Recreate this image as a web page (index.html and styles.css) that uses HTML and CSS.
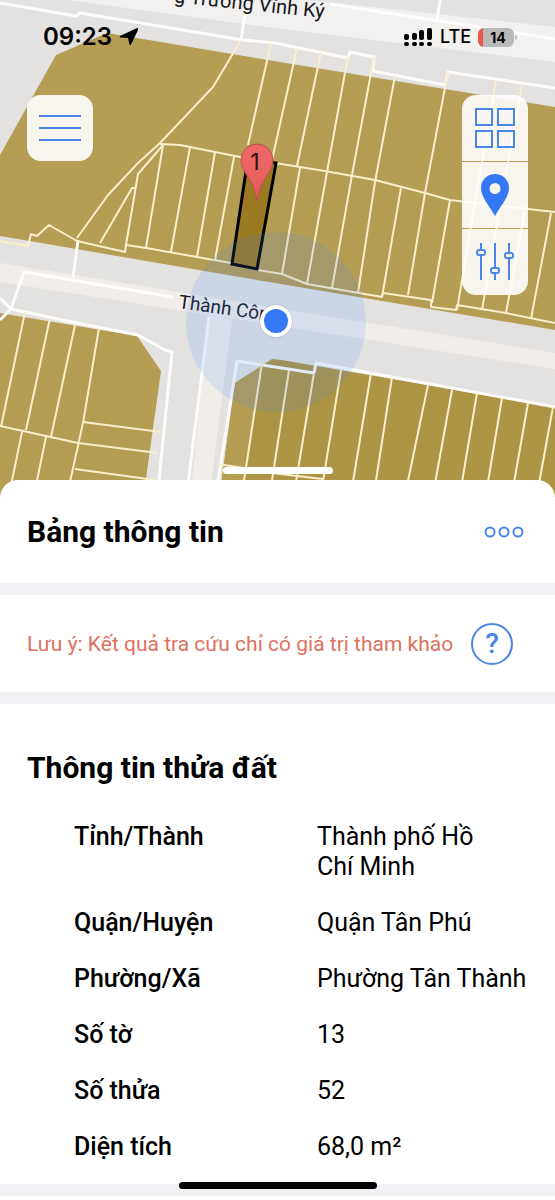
FILE: index.html
```html
<!DOCTYPE html>
<html lang="vi">
<head>
<meta charset="utf-8">
<meta name="viewport" content="width=device-width, initial-scale=1">
<title>Bảng thông tin</title>
<link rel="stylesheet" href="styles.css">
</head>
<body>
<div class="screen">
  <section class="map" aria-label="Bản đồ">
    <svg class="map-canvas" viewBox="0 0 555 500" preserveAspectRatio="xMidYMin slice" aria-hidden="true">
      <rect width="555" height="500" fill="#e3e2e1"/>
      <!-- roads -->
      <path d="M67 0H308L555 27V62L275 28Z" fill="#f2f1f0"/>
      <path d="M0 263L555 353V369L0 282Z" fill="#f1eeea"/>
      <path d="M209 314L232 320L209 500H190Z" fill="#f1eeea"/>
      <!-- blocks -->
      <path d="M0 155L56 55L107 33L280 62L555 107V330L275 283L0 236Z" fill="#b59d54"/>
      <path d="M0 313L137 336L161 371L143 500H0Z" fill="#b59d54"/>
      <path d="M219 500L235 383L272 359L282 360L555 407V500Z" fill="#ad9344"/>
      <path d="M219 500L235 383L262 366L243 500Z" fill="#b59d54"/>
      <!-- parcel borders -->
      <g class="lines-light">
        <path d="M0 3L76 16L80 13L243 40L275 43L348 58L350 52L374 57L373 71L445 85L448 72L555 88"/>
        <path d="M245 15L241 40M330 4L555 39M440 0L437 20"/>
        <path d="M0 298L11 309L24 272L173 297M0 320L11 309L72 322L138 335L165 350L172 352L157 500M78 240L73 278M209 317L186 500"/>
        <path d="M314 373L316 363L555 407M237 361L275 367L314 373M237 361L215 500"/>
      </g>
      <g class="lines">
        <path d="M241 40L213 87L160 143L138 163L108 195L77 238M163 145L138 174L126 245M100 243L132 188H136"/>
        <path d="M160 144L180 145L240 157L275 163L325 171L375 180L425 193L450 200L475 203L555 212"/>
        <path d="M163 145L146 248M190 147L171 252M215 152L197 257M234 157L215 260M300 168L282 274M327 172L307 284M352 175L332 288M375 182L358 293M401 188L382 297M425 193L408 295M450 200L432 303M475 203L457 310M500 207L482 310M525 210L506 313M551 213L531 319"/>
        <path d="M271 43L248 145M297 48L272 160M321 52L297 166M348 56L327 172M374 57L352 175M395 76L375 182M448 72L425 193M496 80L475 203M522 84L500 207"/>
        <path d="M0 241L28 246L31 234L37 236L49 225L77 241L99 246L125 252L126 245L146 248L197 257L231 263L258 270L282 274L307 284L382 297L383 293L431 300L431 307L456 310L457 305L506 313L555 323"/>
        <path d="M25 312L1 427M50 318L26 430M75 325L51 437M99 328L83 423L66 500M0 426L78 443L158 453M83 422L161 432M75 469L155 480M22 432L8 500M46 437L33 500"/>
        <path d="M262 363L241 500M218 464L280 474L323 479M289 370L269 500M314 373L293 500M341 370L320 500M371 373L350 500M392 377L373 500M428 385L404 500M452 390L432 500M477 393L459 500M502 398L485 500M528 403L511 500M553 407L536 500"/>
      </g>
      <!-- street names -->
      <g class="street">
        <text transform="translate(324 18) rotate(6)" text-anchor="end">g Trương Vĩnh Ký</text>
        <text class="street-small" transform="translate(178 308) rotate(8)">Thành Công</text>
      </g>
      <path d="M248 158L276 163L257 269L232 264Z" fill="#9c7a24" stroke="#000" stroke-width="3"/>
      <!-- current location -->
      <circle cx="276" cy="322" r="90" fill="#4285f4" fill-opacity=".14"/>
      <circle cx="276" cy="321" r="17" fill="#000" fill-opacity=".08"/>
      <circle cx="276" cy="321" r="16" fill="#fff"/>
      <circle cx="276" cy="321" r="12" fill="#3478f6"/>
      <!-- numbered pin -->
      <defs>
        <linearGradient id="pin" x1="0" y1="0" x2="0" y2="1">
          <stop offset="0" stop-color="#ee6a69"/>
          <stop offset="1" stop-color="#e35b58"/>
        </linearGradient>
      </defs>
      <path d="M257 201C255 188 251 182 246 174C242 168 241 164 241 160A16 16 0 0 1 273 160C273 164 272 168 268 174C263 182 259 188 257 201Z" fill="url(#pin)" stroke="#c0504a" stroke-width="1"/>
      <text class="pin-number" x="255" y="170" text-anchor="middle">1</text>
    </svg>

    <header class="status">
      <div class="status-group">
        <time class="clock">09:23</time>
        <svg width="20" height="20" viewBox="0 0 20 20" aria-hidden="true"><path d="M18 1L1 9Q0 10.500 2 10.500L9 11L10.500 17.500Q11 19 12 17.500L19 3Q19.500 1 18 1Z" fill="#000"/></svg>
      </div>
      <div class="status-group">
        <svg width="29" height="20" viewBox="0 0 29 20" aria-hidden="true">
          <g fill="#000"><rect x="0" y="7" width="5" height="6" rx="2"/><rect x="8" y="6" width="5" height="7" rx="2"/><rect x="15" y="3" width="5" height="10" rx="2"/><rect x="23" y="1" width="5" height="12" rx="2"/>
          <rect x="0" y="15" width="5" height="4" rx="2"/><rect x="8" y="15" width="5" height="4" rx="2"/><rect x="15" y="15" width="5" height="4" rx="2"/><rect x="23" y="15" width="5" height="4" rx="2"/></g>
        </svg>
        <span class="network">LTE</span>
        <span class="battery">14</span>
      </div>
    </header>

    <div class="controls">
      <button class="tool menu" type="button" aria-label="Menu">
        <svg width="42" height="28" viewBox="0 0 42 28" stroke="#4a86e8" stroke-width="2"><path d="M0 2H42M0 14H42M0 26H42"/></svg>
      </button>
      <div class="toolbar">
        <button class="tool" type="button" aria-label="Lớp bản đồ">
          <svg width="40" height="40" viewBox="0 0 40 40" fill="none" stroke="#4a86e8" stroke-width="2"><path d="M1 1H17V17H1ZM23 1H39V17H23ZM1 23H17V39H1ZM23 23H39V39H23Z"/></svg>
        </button>
        <button class="tool" type="button" aria-label="Vị trí">
          <svg width="28" height="42" viewBox="0 0 28 42"><path fill="#3478f6" fill-rule="evenodd" d="M14 0A14 14 0 0 0 0 14C0 23 9 33 14 42C19 33 28 23 28 14A14 14 0 0 0 14 0ZM14 9A5.500 5.500 0 1 1 14 20A5.500 5.500 0 1 1 14 9Z"/></svg>
        </button>
        <button class="tool" type="button" aria-label="Bộ lọc">
          <svg width="40" height="38" viewBox="0 0 40 38" fill="none" stroke="#4a86e8" stroke-width="2"><path d="M6 0V7M6 12V37M20 0V24M20 30V37M34 0V10M34 15V37"/><rect x="2" y="7" width="8" height="5" rx="2"/><rect x="16" y="25" width="8" height="5" rx="2"/><rect x="30" y="10" width="8" height="5" rx="2"/></svg>
        </button>
      </div>
    </div>
    <div class="grabber"></div>
  </section>

  <main class="sheet">
    <section class="sheet-head">
      <h1>Bảng thông tin</h1>
      <button class="plain" type="button" aria-label="Thêm">
        <svg width="40" height="12" viewBox="0 0 40 12" fill="none" stroke="#4a86e8" stroke-width="2"><circle cx="6" cy="6" r="4.500"/><circle cx="20" cy="6" r="4.500"/><circle cx="34" cy="6" r="4.500"/></svg>
      </button>
    </section>
    <section class="note">
      <p>Lưu ý: Kết quả tra cứu chỉ có giá trị tham khảo</p>
      <button class="help" type="button" aria-label="Trợ giúp">?</button>
    </section>
    <section class="details">
      <h2>Thông tin thửa đất</h2>
      <table>
        <tbody>
          <tr><th scope="row">Tỉnh/Thành</th><td>Thành phố Hồ Chí&nbsp;Minh</td></tr>
          <tr><th scope="row">Quận/Huyện</th><td>Quận Tân Phú</td></tr>
          <tr><th scope="row">Phường/Xã</th><td>Phường Tân Thành</td></tr>
          <tr><th scope="row">Số tờ</th><td>13</td></tr>
          <tr><th scope="row">Số thửa</th><td>52</td></tr>
          <tr><th scope="row">Diện tích</th><td>68,0 m²</td></tr>
        </tbody>
      </table>
    </section>
  </main>
  <div class="home-indicator"></div>
</div>
</body>
</html>
```
FILE: styles.css
```css
* { box-sizing: border-box; }

body {
  margin: 0;
  background: #fff;
  color: #000;
  font-family: Roboto, "Noto Sans", sans-serif;
}

h1, h2, p { margin: 0; }

button {
  padding: 0;
  border: 0;
  background: none;
  font-family: inherit;
}

.screen {
  position: relative;
  min-height: 100vh;
}

/* Map */
.map {
  position: relative;
  min-height: 500px;
  overflow: hidden;
}

.map-canvas {
  position: absolute;
  inset: 0;
  width: 100%;
  height: 100%;
}

.street { font-size: 20px; fill: #15181f; }
.street-small { font-size: 19px; }
.lines, .lines-light { fill: none; stroke-width: 2; stroke-linejoin: round; }
.lines { stroke: #faeecb; }
.lines-light { stroke: #fdfcfa; stroke-width: 3; }
.pin-number { font-family: Inter, sans-serif; font-size: 23px; fill: #2b1210; }

.status {
  position: relative;
  display: flex;
  justify-content: space-between;
  align-items: center;
  padding: 23px 41px 0 43px;
}

.status-group {
  display: flex;
  align-items: center;
  gap: 7px;
}

.clock {
  font: 600 24px/28px Inter, sans-serif;
}

.network { font: 500 18px/28px Inter, sans-serif; }

.battery {
  position: relative;
  width: 36px;
  border-radius: 6px;
  background: linear-gradient(90deg, #e8564c 5px, #b9b9b9 5px);
  font: 700 14px/19px Inter, sans-serif;
  text-align: center;
  padding-left: 4px;
}

.battery::after {
  content: "";
  position: absolute;
  top: 7px;
  right: -3px;
  width: 2px;
  height: 5px;
  border-radius: 0 2px 2px 0;
  background: #b9b9b9;
}

.controls {
  position: relative;
  display: flex;
  justify-content: space-between;
  align-items: flex-start;
  padding: 44px 27px 0;
}

.toolbar {
  display: flex;
  flex-direction: column;
  gap: 1px;
  border-radius: 14px;
  overflow: hidden;
}

.tool {
  display: flex;
  justify-content: center;
  align-items: center;
  width: 66px;
  height: 66px;
  background: rgba(255, 255, 255, .9);
}

.menu { border-radius: 14px; }

.grabber {
  position: absolute;
  top: 467px;
  left: 50%;
  width: 110px;
  height: 7px;
  border-radius: 4px;
  background: #fff;
  transform: translateX(-50%);
}

/* Information sheet */
.sheet {
  position: relative;
  margin-top: -20px;
  border-radius: 18px 18px 0 0;
  background: #fff;
}

.sheet > section { border-bottom: 12px solid #f1f0f5; }

.sheet-head {
  display: flex;
  justify-content: space-between;
  align-items: center;
  padding: 31px 31px 31px 27px;
}

h1, h2 {
  font-size: 30px;
  line-height: 41px;
  font-weight: 700;
}

.plain { display: flex; }

.note {
  display: flex;
  justify-content: space-between;
  align-items: center;
  padding: 28px 42px 27px 27px;
}

.note p {
  color: #e0715f;
  font-size: 21px;
  line-height: 28px;
}

.help {
  width: 42px;
  height: 42px;
  border: 2px solid #4a86e8;
  border-radius: 50%;
  color: #4a86e8;
  font-size: 28px;
  line-height: 36px;
  font-weight: 500;
}

.details { padding: 43px 27px 9px; }

table {
  width: 100%;
  margin-top: 21px;
  padding-left: 47px;
  border-spacing: 0;
  table-layout: fixed;
}

th, td {
  padding: 13px 0;
  font-size: 25px;
  line-height: 30px;
  text-align: left;
  vertical-align: top;
}

th { width: 243px; font-weight: 500; }
td { font-weight: 400; }

.home-indicator {
  position: fixed;
  bottom: 11px;
  left: 50%;
  width: 198px;
  height: 7px;
  border-radius: 4px;
  background: #000;
  transform: translateX(-50%);
}
```
